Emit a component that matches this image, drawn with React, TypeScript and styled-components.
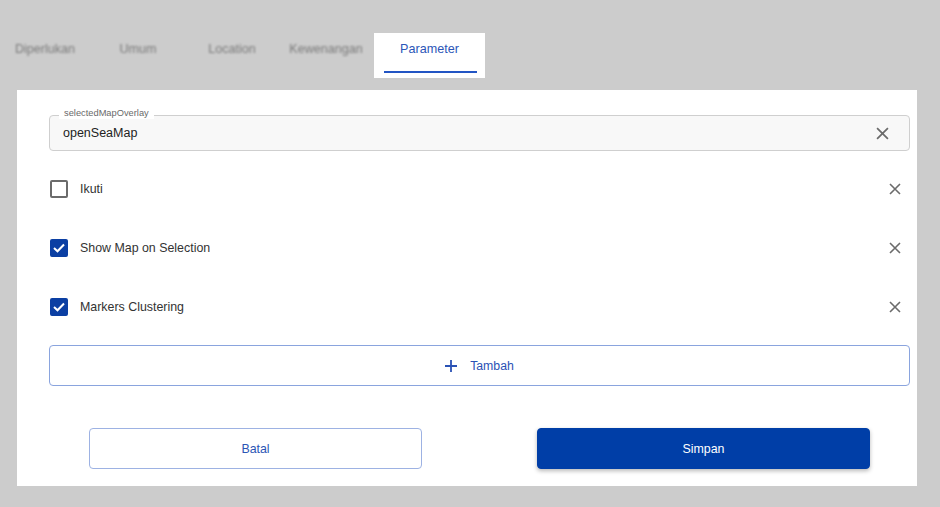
import React from "react";
import styled, { createGlobalStyle } from "styled-components";

const Global = createGlobalStyle`
  html, body { margin: 0; padding: 0; background: #cccccc; }
  body { font-family: "Liberation Sans", Arial, sans-serif; }
  * { box-sizing: border-box; }
`;

const Page = styled.div`
  width: 940px;
  height: 507px;
  background: #cccccc;
  padding-top: 33px;
  overflow: hidden;
`;

const TabBar = styled.div`
  display: flex;
  height: 45px;
`;

const Tab = styled.div<{ $w: number; $active?: boolean }>`
  position: relative;
  width: ${(p) => p.$w}px;
  height: 45px;
  padding-top: 8px;
  text-align: center;
  font-size: 12.6px;
  line-height: 16px;
  color: ${(p) => (p.$active ? "#2c56b8" : "#7a7a7a")};
  background: ${(p) => (p.$active ? "#ffffff" : "transparent")};
  filter: ${(p) => (p.$active ? "none" : "blur(1.1px)")};
`;

const Underline = styled.div`
  position: absolute;
  left: 10px;
  right: 8px;
  top: 38px;
  height: 2px;
  background: #2255c4;
`;

const Panel = styled.div`
  margin: 12px 0 0 17px;
  width: 900px;
  height: 396px;
  background: #ffffff;
  padding: 25px 7px 0 32px;
  display: flex;
  flex-direction: column;
`;

const Field = styled.div`
  position: relative;
  height: 36px;
  border: 1px solid #cfcfcf;
  border-radius: 4px;
  background: #f8f8f8;
  display: flex;
  align-items: center;
  padding: 0 20px 0 13px;
  margin-bottom: 8px;
`;

const FieldLabel = styled.span`
  position: absolute;
  left: 9px;
  top: -8px;
  padding: 0 5px;
  background: #ffffff;
  font-size: 9.3px;
  line-height: 11px;
  color: #6a6a6a;
`;

const FieldValue = styled.span`
  flex: 1;
  font-size: 12.5px;
  color: #222;
`;

const Row = styled.div`
  height: 59px;
  display: flex;
  align-items: center;
  padding: 0 9px 0 1px;
`;

const Box = styled.span<{ $checked?: boolean }>`
  width: 18px;
  height: 18px;
  border-radius: 2px;
  border: 2px solid ${(p) => (p.$checked ? "#0b3fa3" : "#6b6b6b")};
  background: ${(p) => (p.$checked ? "#0b3fa3" : "#ffffff")};
  display: flex;
  align-items: center;
  justify-content: center;
  margin-right: 12px;
`;

const RowLabel = styled.span`
  flex: 1;
  font-size: 12.4px;
  color: #333;
`;

const AddButton = styled.button`
  margin-top: 9px;
  height: 41px;
  border: 1px solid #8aa4de;
  border-radius: 4px;
  background: #ffffff;
  display: flex;
  align-items: center;
  justify-content: center;
  gap: 13px;
  font-family: inherit;
  font-size: 12.3px;
  color: #2a52b5;
  padding: 0;
`;

const Actions = styled.div`
  margin-top: 42px;
  display: flex;
  justify-content: center;
  gap: 115px;
`;

const ActionButton = styled.button<{ $primary?: boolean }>`
  width: 333px;
  height: 41px;
  border-radius: 4px;
  font-family: inherit;
  font-size: 12.4px;
  border: 1px solid ${(p) => (p.$primary ? "#003ea7" : "#9db2e3")};
  background: ${(p) => (p.$primary ? "#003ea7" : "#ffffff")};
  color: ${(p) => (p.$primary ? "#ffffff" : "#2b55b5")};
  box-shadow: ${(p) => (p.$primary ? "0 2px 4px rgba(0,0,0,0.28)" : "none")};
`;

const Close = ({ size = 12 }: { size?: number }) => (
  <svg width={size} height={size} viewBox="0 0 12 12">
    <path d="M1 1 L11 11 M11 1 L1 11" stroke="#6b6b6b" strokeWidth="1.6" strokeLinecap="butt" />
  </svg>
);

const Check = () => (
  <svg width="12" height="10" viewBox="0 0 12 10">
    <path d="M1 5 L4.5 8.3 L11 1.5" stroke="#ffffff" strokeWidth="2" fill="none" />
  </svg>
);

const Plus = () => (
  <svg width="12" height="12" viewBox="0 0 12 12">
    <path d="M6 0 V12 M0 6 H12" stroke="#2a52b5" strokeWidth="1.8" />
  </svg>
);

const tabs = [
  { label: "Diperlukan", w: 90 },
  { label: "Umum", w: 96 },
  { label: "Location", w: 92 },
  { label: "Kewenangan", w: 96 },
];

const rows = [
  { label: "Ikuti", checked: false },
  { label: "Show Map on Selection", checked: true },
  { label: "Markers Clustering", checked: true },
];

export default function App() {
  return (
    <Page>
      <Global />
      <TabBar>
        {tabs.map((t) => (
          <Tab key={t.label} $w={t.w}>
            {t.label}
          </Tab>
        ))}
        <Tab $w={111} $active>
          Parameter
          <Underline />
        </Tab>
      </TabBar>
      <Panel>
        <Field>
          <FieldLabel>selectedMapOverlay</FieldLabel>
          <FieldValue>openSeaMap</FieldValue>
          <Close size={13} />
        </Field>
        {rows.map((r) => (
          <Row key={r.label}>
            <Box $checked={r.checked}>{r.checked && <Check />}</Box>
            <RowLabel>{r.label}</RowLabel>
            <Close />
          </Row>
        ))}
        <AddButton>
          <Plus />
          Tambah
        </AddButton>
        <Actions>
          <ActionButton>Batal</ActionButton>
          <ActionButton $primary>Simpan</ActionButton>
        </Actions>
      </Panel>
    </Page>
  );
}
